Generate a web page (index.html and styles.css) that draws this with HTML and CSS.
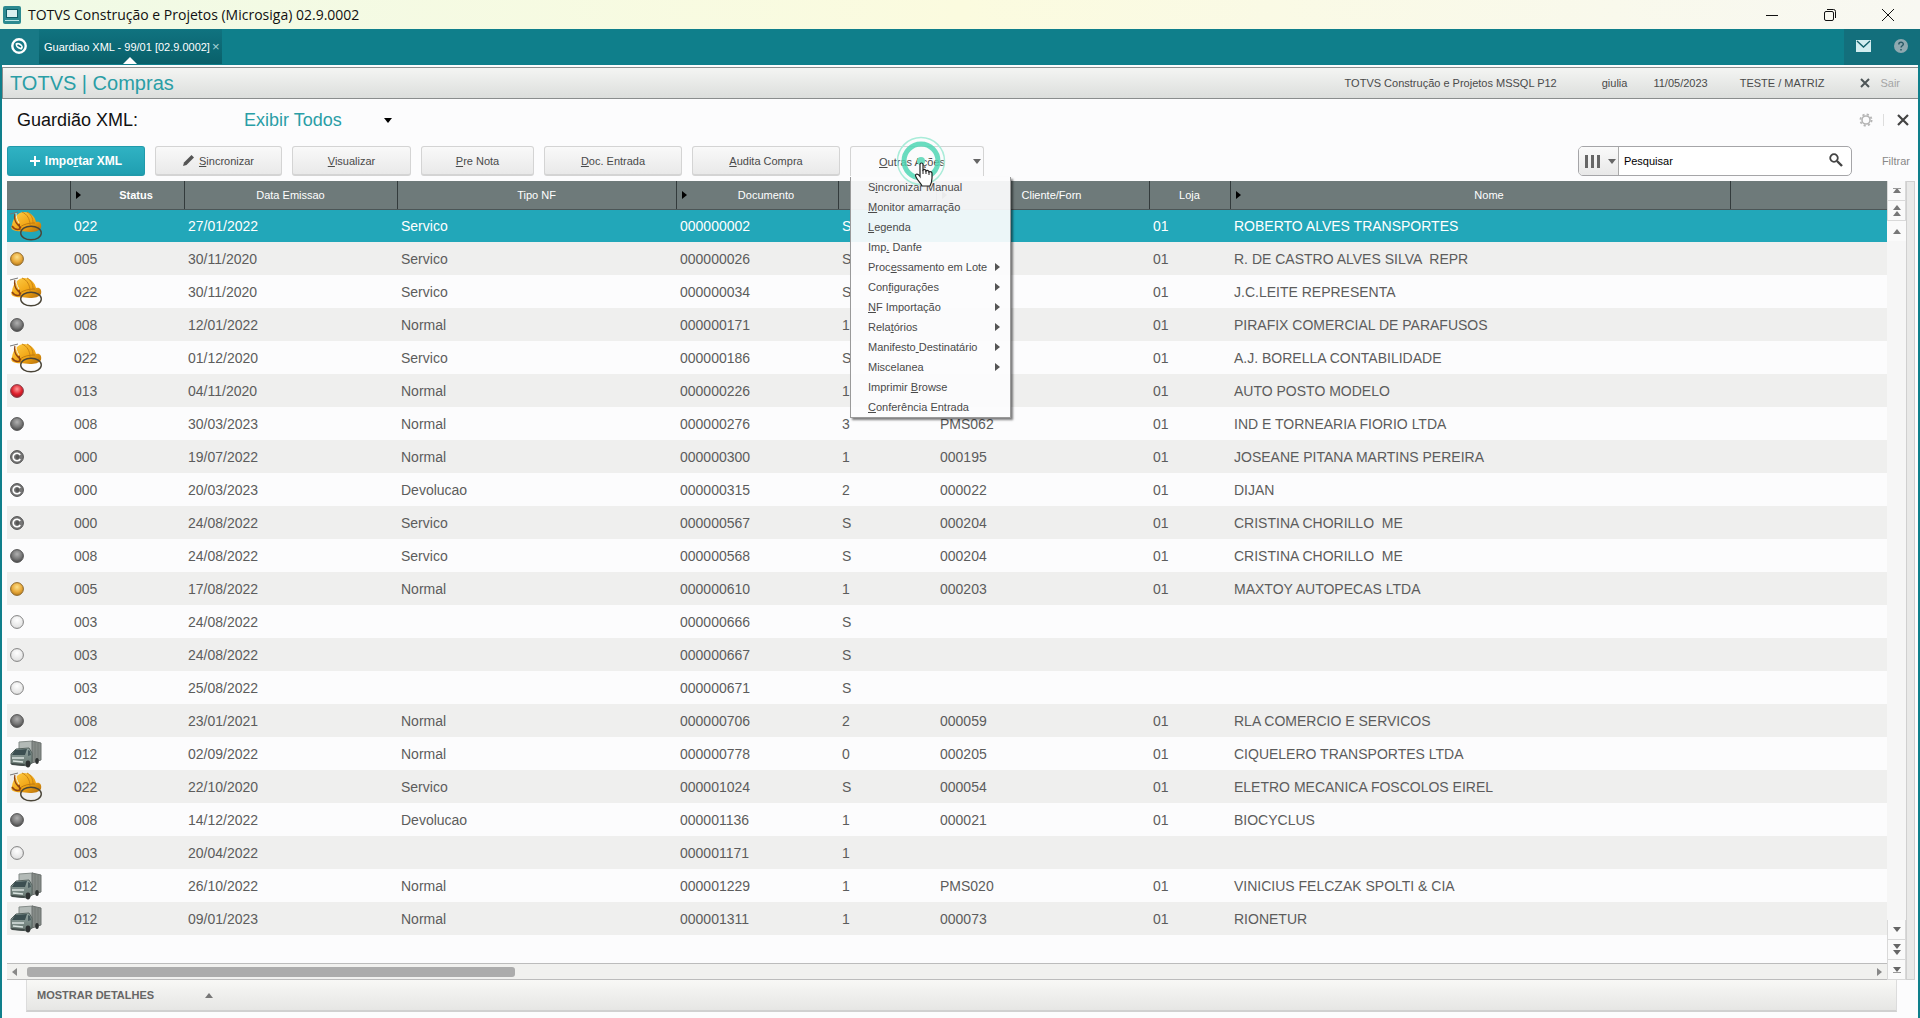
FILE: index.html
```html
<!DOCTYPE html>
<html lang="pt-BR">
<head>
    <meta charset="UTF-8">
    <meta name="viewport" content="width=device-width, initial-scale=1.0">
    <title>TOTVS Construção e Projetos (Microsiga) 02.9.0002</title>
    <link rel="stylesheet" href="styles.css">
</head>
<body>
    <svg class="defs" aria-hidden="true">
        <defs>
            <radialGradient id="gOrange" cx="50%" cy="35%" r="65%"><stop offset="0" stop-color="#fde08a"/><stop offset=".6" stop-color="#e8a93a"/><stop offset="1" stop-color="#b57a1c"/></radialGradient>
            <radialGradient id="gGray" cx="50%" cy="35%" r="65%"><stop offset="0" stop-color="#b0b0b0"/><stop offset=".6" stop-color="#777"/><stop offset="1" stop-color="#484848"/></radialGradient>
            <radialGradient id="gRed" cx="50%" cy="35%" r="65%"><stop offset="0" stop-color="#ff9a9a"/><stop offset=".6" stop-color="#e0202c"/><stop offset="1" stop-color="#a01520"/></radialGradient>
            <radialGradient id="gWhite" cx="50%" cy="35%" r="65%"><stop offset="0" stop-color="#fff"/><stop offset="1" stop-color="#dedede"/></radialGradient>
            <linearGradient id="gHelmet" x1="0" y1="0" x2="1" y2="1"><stop offset="0" stop-color="#ffcf4a"/><stop offset=".6" stop-color="#f0a312"/><stop offset="1" stop-color="#b06c0c"/></linearGradient>
            <linearGradient id="gCab" x1="0" y1="0" x2="0" y2="1"><stop offset="0" stop-color="#93a4a1"/><stop offset="1" stop-color="#66756f"/></linearGradient>
            <symbol id="ball-orange" viewBox="0 0 14 14"><circle cx="7" cy="7" r="6.4" fill="url(#gOrange)" stroke="#8d6a30"/></symbol>
            <symbol id="ball-gray" viewBox="0 0 14 14"><circle cx="7" cy="7" r="6.4" fill="url(#gGray)" stroke="#555"/></symbol>
            <symbol id="ball-red" viewBox="0 0 14 14"><circle cx="7" cy="7" r="6.4" fill="url(#gRed)" stroke="#84414a"/></symbol>
            <symbol id="ball-white" viewBox="0 0 14 14"><circle cx="7" cy="7" r="6.4" fill="url(#gWhite)" stroke="#808080"/></symbol>
            <symbol id="ball-c" viewBox="0 0 14 14"><circle cx="7" cy="7" r="6.4" fill="#777" stroke="#505050"/><path d="M10.200 5A3.800 3.800 0 1 0 10.200 9" fill="none" stroke="#fff" stroke-width="1.600"/><circle cx="7.500" cy="7" r="2" fill="#555"/></symbol>
            <symbol id="helmet" viewBox="0 0 32 30">
                <path d="M0 3l8-2" stroke="#777" fill="none"/>
                <path d="M2 14C3 7 8 1 14 1c7 0 11 5 12 10 4-1 6 2 5 6-2 3-6 4-11 4-7-1-13 0-17-2-2-1-2-3-1-5z" fill="url(#gHelmet)"/>
                <path d="M12 1c5 2 8 7 8 13M17 1c4 2 6 6 6 11" stroke="#c98414" fill="none"/>
                <path d="M10 16c4-3 9-4 15-4" stroke="#c07c10" fill="none"/>
                <path d="M5 3c-1 4 0 8 3 11l3 3M2 15c2 3 5 4 8 3l-1-5" stroke="#8f4312" fill="none" stroke-width="1.400"/>
                <path d="M6 2c0 4 1 7 3 10" stroke="#f4efe0" fill="none"/>
                <ellipse cx="21" cy="22" rx="10.300" ry="6.800" fill="none" stroke="#4a4538" stroke-width="1.400"/>
            </symbol>
            <symbol id="truck" viewBox="0 0 32 28">
                <path d="M9 2l14-1v18H9z" fill="#b3bab7" stroke="#858c89"/>
                <path d="M22 1l9 2v17l-9 3z" fill="#858b88" stroke="#6b706e"/>
                <path d="M25 2v19M28 3v17" stroke="#747a77"/>
                <path d="M1 14l5-5 13-1 3 5v10l-4 3-17-2z" fill="url(#gCab)" stroke="#56635f"/>
                <path d="M5 10l12-1-2 6-13 0z" fill="#3c4f51"/>
                <path d="M18 10l2 1 1 4-3 1z" fill="#4a5c5e"/>
                <path d="M2 18l12 0M3 21l10 1" stroke="#dbe4e1" stroke-width="1.300"/>
                <ellipse cx="18" cy="24" rx="2.400" ry="3.400" fill="#2e3232"/><ellipse cx="27" cy="21" rx="1.800" ry="3" fill="#2e3232"/>
                <path d="M1 23l14 1-1 2-12-1z" fill="#434c4a"/>
            </symbol>
        </defs>
    </svg>

    <header class="titlebar">
        <svg width="18" height="18" viewBox="0 0 18 18"><rect width="18" height="18" rx="2" fill="#2c8a90"/><rect x="3.500" y="3.500" width="11" height="8" fill="#d9f0ef" stroke="#0d5f68"/><path d="M2 14.500h14" stroke="#bfe6e5"/></svg>
        <h1>TOTVS Construção e Projetos (Microsiga) 02.9.0002</h1>
        <div class="window-buttons">
            <button type="button" aria-label="Minimizar"><svg width="14" height="14" viewBox="0 0 14 14"><path d="M1 7.500h12"/></svg></button>
            <button type="button" aria-label="Restaurar"><svg width="14" height="14" viewBox="0 0 14 14"><rect x="1.500" y="3.500" width="9" height="9" rx="1.500"/><path d="M4 1.500h6.500a2 2 0 0 1 2 2V10"/></svg></button>
            <button type="button" aria-label="Fechar"><svg width="14" height="14" viewBox="0 0 14 14"><path d="M1 1l12 12M13 1L1 13"/></svg></button>
        </div>
    </header>

    <nav class="tabbar">
        <a class="home" href="#" aria-label="Início"><svg width="16" height="16" viewBox="0 0 16 16"><circle cx="8" cy="8" r="6.700" fill="none" stroke="#fff" stroke-width="2.400"/><path d="M4.500 5.500c2-1.500 6-.500 7.500 3.500l-1 2.500C7 11.500 4.500 9 4.500 5.500z" fill="#fff"/><path d="M6.500 7l3.500 2" stroke="#14707a" stroke-width="1.600"/></svg></a>
        <div class="tab">
            <span>Guardiao XML - 99/01 [02.9.0002]</span>
            <button type="button" aria-label="Fechar aba">×</button>
        </div>
        <div class="tab-tools">
            <button type="button" aria-label="Mensagens"><svg width="15" height="12" viewBox="0 0 15 12"><rect width="15" height="12" fill="#d3edf0"/><path d="M1 1l6.500 6L14 1" fill="none" stroke="#13606a" stroke-width="1.400"/></svg></button>
            <button type="button" aria-label="Ajuda"><svg width="14" height="14" viewBox="0 0 14 14"><circle cx="7" cy="7" r="7" fill="#8fa9b0"/><path d="M4.800 5.500c0-3 4.600-2.800 4.500-.3 0 1.600-2.200 1.500-2.200 3.300M7 10v1.600" fill="none" stroke="#2a5a66" stroke-width="1.500"/></svg></button>
        </div>
    </nav>

    <div class="window">
        <div class="module">
            <h2>TOTVS | Compras</h2>
            <span class="env">TOTVS Construção e Projetos MSSQL P12</span>
            <span class="user">giulia</span>
            <span class="date">11/05/2023</span>
            <span class="branch">TESTE / MATRIZ</span>
            <a class="exit" href="#"><svg width="10" height="10" viewBox="0 0 10 10"><path d="M1 1l8 8M9 1L1 9" stroke="#4d5557" stroke-width="2"/></svg>Sair</a>
        </div>

        <main>
            <div class="view-head">
                <h3>Guardião XML:</h3>
                <button type="button" class="view-filter">Exibir Todos <i class="down black"></i></button>
                <div class="view-tools">
                    <button type="button" aria-label="Configurar"><svg width="14" height="14" viewBox="0 0 14 14"><circle cx="7" cy="7" r="4" fill="none" stroke="#b5b5b5" stroke-width="1.600"/><circle cx="7" cy="7" r="5.600" fill="none" stroke="#b5b5b5" stroke-width="1.800" stroke-dasharray="2.200 2.200"/></svg></button>
                    <button type="button" class="close" aria-label="Fechar"><svg width="12" height="12" viewBox="0 0 12 12"><path d="M1 1l10 10M11 1L1 11" stroke="#444" stroke-width="2.200"/></svg></button>
                </div>
            </div>

            <div class="toolbar">
                <button type="button" class="btn primary"><svg width="10" height="10" viewBox="0 0 10 10"><path d="M5 0v10M0 5h10" stroke="#fff" stroke-width="2"/></svg><span>Impo<u>r</u>tar XML</span></button>
                <button type="button" class="btn b-sinc"><svg width="11" height="11" viewBox="0 0 11 11"><path d="M0 11l1-3.500L8.500 0 11 2.500 3.500 10z" fill="#555"/></svg><span><u>S</u>incronizar</span></button>
                <button type="button" class="btn b-vis"><span><u>V</u>isualizar</span></button>
                <button type="button" class="btn b-pre"><span><u>P</u>re Nota</span></button>
                <button type="button" class="btn b-doc"><span><u>D</u>oc. Entrada</span></button>
                <button type="button" class="btn b-aud"><span><u>A</u>udita Compra</span></button>
                <div class="more">
                    <button type="button" class="btn b-more"><span><u>O</u>utras Ações</span><i class="down"></i></button>
                    <ul class="menu">
                        <li><a href="#">S<u>i</u>ncronizar Manual</a></li>
                        <li><a href="#"><u>M</u>onitor amarração</a></li>
                        <li><a href="#"><u>L</u>egenda</a></li>
                        <li><a href="#">Imp<u>.</u> Danfe</a></li>
                        <li class="sub"><a href="#">Proc<u>e</u>ssamento em Lote</a></li>
                        <li class="sub"><a href="#">Con<u>f</u>igurações</a></li>
                        <li class="sub"><a href="#"><u>N</u>F Importação</a></li>
                        <li class="sub"><a href="#">Rela<u>t</u>órios</a></li>
                        <li class="sub"><a href="#">Manifesto<u> </u>Destinatário</a></li>
                        <li class="sub"><a href="#">Miscelanea</a></li>
                        <li><a href="#">Imprimir <u>B</u>rowse</a></li>
                        <li><a href="#"><u>C</u>onferência Entrada</a></li>
                    </ul>
                    <svg class="pointer" width="52" height="54" viewBox="0 0 52 54">
                        <circle cx="25" cy="25" r="23.500" fill="none" stroke="#a9ecd9" stroke-width="1.500"/>
                        <circle cx="25" cy="25" r="17" fill="none" stroke="#4fd6b4" stroke-width="5" opacity=".85"/>
                        <circle cx="25" cy="25" r="4" fill="#6fdcc0"/>
                        <path d="M24 28.500c0-2 3-2 3 0V34c1-1 3-.500 3 1 1-1 3-.500 3 1 1.500-.800 3 0 3 1.500V42c0 4-1.500 7-2 8h-8c-1-3-6-7-6.500-10.500 0-2 2.500-2 4.500 1z" fill="#fff" stroke="#222" stroke-width="1.200"/>
                        <path d="M27 34v4M30 35v3M33 36v3" stroke="#222"/>
                    </svg>
                </div>
                <form class="search">
                    <button type="button" class="cols" aria-label="Colunas"><svg width="15" height="13" viewBox="0 0 15 13"><path d="M1.500 0v13M7.500 0v13M13.500 0v13" stroke="#666" stroke-width="3"/></svg><i class="down"></i></button>
                    <input type="text" value="Pesquisar" aria-label="Pesquisar">
                    <button type="button" class="lens" aria-label="Buscar"><svg width="14" height="14" viewBox="0 0 14 14"><circle cx="5" cy="5" r="3.800" fill="none" stroke="#444" stroke-width="1.800"/><path d="M8 8l5 5" stroke="#444" stroke-width="2.400"/></svg></button>
                </form>
                <a class="filter" href="#">Filtrar</a>
            </div>

            <div class="grid">
                <div class="grid-body">
                    <table>
                        <colgroup>
                            <col class="c-icon"><col class="c-status"><col class="c-data"><col class="c-tipo"><col class="c-doc"><col class="c-serie"><col class="c-forn"><col class="c-loja"><col class="c-nome"><col>
                        </colgroup>
                        <thead>
                            <tr><th></th><th class="key"><b>Status</b></th><th>Data Emissao</th><th>Tipo NF</th><th class="key">Documento</th><th></th><th class="key">Cliente/Forn</th><th>Loja</th><th class="key">Nome</th><th></th></tr>
                        </thead>
                        <tbody id="rows"></tbody>
                    </table>
                    <div class="hscroll"><i class="left"></i><div class="track"><div class="thumb"></div></div><i class="right"></i></div>
                </div>
                <div class="vnav">
                    <button type="button" aria-label="Primeiro"><i class="up bar"></i></button>
                    <button type="button" aria-label="Página anterior"><i class="up"></i><i class="up"></i></button>
                    <button type="button" class="plain" aria-label="Anterior"><i class="up"></i></button>
                    <div class="fill"></div>
                    <button type="button" aria-label="Próximo"><i class="down"></i></button>
                    <button type="button" aria-label="Próxima página"><i class="down"></i><i class="down"></i></button>
                    <button type="button" aria-label="Último"><i class="down bar"></i></button>
                </div>
                <div class="vtrack"></div>
            </div>

            <button type="button" class="details">MOSTRAR DETALHES <i class="up"></i></button>
        </main>
    </div>

    <script src="script.js"></script>
</body>
</html>
```
FILE: styles.css
```css
* {
    box-sizing: border-box;
}

body {
    margin: 0;
    min-height: 100vh;
    display: flex;
    flex-direction: column;
    font-family: "Liberation Sans", Arial, sans-serif;
    font-size: 11px;
    color: #4a4a4a;
    background-color: #0f7f8b;
}

h1, h2, h3, ul {
    margin: 0;
    padding: 0;
    font-weight: normal;
}

button {
    padding: 0;
    border: none;
    background: none;
    font: inherit;
    color: inherit;
}

a {
    color: inherit;
    text-decoration: none;
}

.defs {
    position: absolute;
    width: 0;
    height: 0;
}

/* setas */
.up, .down, .left, .right {
    width: 0;
    height: 0;
    border: 4px solid transparent;
}

.up {
    border-top: none;
    border-bottom: 5px solid #777;
}

.down {
    border-bottom: none;
    border-top: 5px solid #666;
}

.left {
    border-left: none;
    border-right: 5px solid #888;
}

.right {
    border-right: none;
    border-left: 5px solid #888;
}

.down.black {
    border-top-color: #000;
}

/* barra da janela */
.titlebar {
    display: flex;
    align-items: center;
    height: 29px;
    padding: 0 3px;
    gap: 7px;
    background: linear-gradient(90deg, #f0fae6, #fbfbdf 50%, #f8f8f2);
}

.titlebar h1 {
    flex: 1;
    font-family: "Open Sans", "Segoe UI", sans-serif;
    font-size: 14px;
    color: #111;
}

.window-buttons {
    display: flex;
}

.window-buttons button {
    width: 58px;
    height: 29px;
}

.window-buttons svg {
    display: block;
    margin: auto;
    fill: none;
    stroke: #111;
}

.tabbar {
    display: flex;
    height: 36px;
    background-color: #0f7f8b;
}

.home {
    width: 39px;
    padding: 9px 11px;
    background-color: #187986;
}

.tab {
    position: relative;
    display: flex;
    align-items: center;
    gap: 2px;
    height: 35px;
    padding: 0 2px 0 5px;
    color: #fff;
    background: linear-gradient(#107380, #09606a);
}

.tab button {
    color: #a5d3d8;
    font-size: 13px;
}

.tab::after {
    content: "";
    position: absolute;
    left: 50%;
    bottom: 0;
    margin-left: -7px;
    border: 7px solid transparent;
    border-top: none;
    border-bottom-color: #fff;
}

.tab-tools {
    display: flex;
    margin-left: auto;
    background-color: #136f7c;
}

.tab-tools button {
    width: 38px;
}

.window {
    flex: 1;
    display: flex;
    flex-direction: column;
    margin: 0 2px;
    padding-top: 2px;
    background-color: #fcfcfd;
}

.module {
    display: flex;
    align-items: center;
    height: 32px;
    padding: 0 18px 0 7px;
    border: 1px solid #8a8d8d;
    border-right: none;
    background: linear-gradient(#f4f5f3, #dcdedc);
}

.module h2 {
    flex: 1;
    font-size: 20px;
    color: #2a9ea6;
}

.user {
    margin-left: 45px;
}

.date {
    margin-left: 26px;
}

.branch {
    margin-left: 32px;
}

.exit {
    display: flex;
    align-items: center;
    gap: 10px;
    margin-left: 36px;
    color: #a5a5a5;
}

main {
    flex: 1;
    padding: 0 3px 0 5px;
}

.view-head {
    display: flex;
    align-items: center;
    height: 42px;
    padding-left: 10px;
}

.view-head h3 {
    width: 227px;
    font-size: 18px;
    color: #111;
}

.view-filter {
    display: flex;
    align-items: center;
    gap: 42px;
    font-size: 18px;
    color: #2a9ea6;
}

.view-tools {
    display: flex;
    align-items: center;
    gap: 10px;
    margin-left: auto;
    padding-right: 6px;
}

.view-tools svg {
    display: block;
}

.view-tools .close {
    padding-left: 13px;
    border-left: 1px solid #ddd;
}

.toolbar {
    display: flex;
    align-items: center;
    gap: 10px;
    padding-top: 5px;
    margin-bottom: 5px;
}

.btn {
    display: flex;
    align-items: center;
    justify-content: center;
    gap: 5px;
    height: 30px;
    border: 1px solid #d4d4d4;
    border-bottom-width: 2px;
    border-radius: 3px;
    background: linear-gradient(#f9f9f9, #e9e9e9);
}

.btn.primary {
    width: 138px;
    border-color: #209aab;
    color: #fff;
    font-weight: bold;
    font-size: 12px;
    background: linear-gradient(#30b2c3, #209fb1);
}

.b-sinc { width: 127px; }
.b-vis { width: 119px; }
.b-pre { width: 113px; }
.b-doc { width: 138px; }
.b-aud { width: 148px; }

.more {
    position: relative;
}

.btn.b-more {
    justify-content: space-between;
    width: 134px;
    padding: 0 2px 0 28px;
    border-bottom: none;
    border-radius: 3px 3px 0 0;
    background: #fbfbfc;
}

.menu {
    position: absolute;
    z-index: 2;
    top: 31px;
    left: 0;
    width: 161px;
    list-style: none;
    border: 1px solid #9a9a9a;
    border-top: none;
    background-color: rgba(252, 252, 253, 0.93);
    box-shadow: 2px 2px 2px rgba(0, 0, 0, 0.5);
}

.menu li {
    display: flex;
    align-items: center;
    justify-content: space-between;
    height: 20px;
    padding: 0 10px 0 17px;
}

.menu .sub::after {
    content: "";
    border: 4px solid transparent;
    border-right: none;
    border-left: 5px solid #555;
}

.pointer {
    position: absolute;
    z-index: 3;
    top: -10px;
    left: 46px;
}

.search {
    display: flex;
    width: 274px;
    height: 30px;
    margin-left: auto;
    border: 1px solid #a5a5a8;
    border-radius: 5px;
    background-color: #fff;
    overflow: hidden;
}

.cols {
    display: flex;
    align-items: center;
    gap: 8px;
    width: 40px;
    padding-left: 6px;
    border-right: 1px solid #aaa;
    background: linear-gradient(#fafafa, #e8e8e8);
}

.search input {
    flex: 1;
    min-width: 0;
    padding: 0 5px;
    border: none;
    outline: none;
    font: inherit;
    color: #000;
}

.lens {
    width: 30px;
}

.filter {
    margin-left: 20px;
    padding-right: 5px;
    color: #888;
}

.grid {
    display: flex;
}

.grid-body {
    flex: 1;
    display: flex;
    flex-direction: column;
    min-width: 0;
}

table {
    width: 100%;
    table-layout: fixed;
    border-collapse: collapse;
}

.c-icon { width: 63px; }
.c-status { width: 114px; }
.c-data { width: 213px; }
.c-tipo { width: 279px; }
.c-doc { width: 162px; }
.c-serie { width: 98px; }
.c-forn { width: 213px; }
.c-loja { width: 81px; }
.c-nome { width: 500px; }

th {
    position: relative;
    height: 28px;
    padding: 0;
    border-right: 1px solid #333b3c;
    border-bottom: 1px solid #4c5556;
    font-weight: normal;
    color: #fff;
    background-color: #6e7a7a;
}

th:last-child {
    border-right: none;
}

th.key {
    padding-left: 18px;
}

th.key::before {
    content: "";
    position: absolute;
    left: 5px;
    top: 10px;
    border: 4px solid transparent;
    border-right: none;
    border-left: 5px solid #000;
}

td {
    height: 33px;
    padding: 0 4px;
    font-size: 14px;
    color: #5c5c5c;
    white-space: pre;
}

td:first-child {
    padding-left: 3px;
}

td svg {
    display: block;
}

tbody tr:nth-child(even) {
    background-color: #efefee;
}

tbody tr.selected {
    background-color: #22a7b9;
}

tr.selected td {
    color: #fff;
}

.hscroll {
    display: flex;
    align-items: center;
    gap: 10px;
    height: 17px;
    margin-top: 28px;
    padding: 0 5px;
    border-top: 1px solid #bcbcbc;
    border-bottom: 1px solid #bcbcbc;
    background-color: #f1f1ef;
}

.track {
    flex: 1;
}

.thumb {
    width: 26.5%;
    height: 10px;
    border-radius: 3px;
    background-color: #acacac;
}

.vnav {
    display: flex;
    flex-direction: column;
    width: 19px;
    background-color: #f6f6f6;
}

.vnav button {
    display: flex;
    flex-direction: column;
    align-items: center;
    justify-content: center;
    gap: 1px;
    height: 20px;
    border: 1px solid #d9d9d9;
    border-top: none;
    background-color: #fafafa;
}

.vnav .plain {
    border: none;
}

.vnav .bar::before {
    content: "";
    display: block;
    width: 8px;
    height: 1px;
    margin-left: -4px;
    background-color: #999;
}

.fill {
    flex: 1;
}

.vtrack {
    width: 9px;
    border: 1px solid #d0d0d0;
    background-color: #e9e9e8;
}

.details {
    display: flex;
    align-items: center;
    gap: 51px;
    width: calc(100% - 37px);
    height: 32px;
    margin-left: 19px;
    padding-left: 10px;
    border: 1px solid #dcdcdc;
    border-top: none;
    border-bottom: 2px solid #d0d0d0;
    font-weight: bold;
    color: #666;
    background: linear-gradient(#f8f8f6, #e6e6e4);
}
```
FILE: script.js
```js
// ícone, status, emissão, tipo, documento, série, fornecedor, loja, nome
const rows = [
    ['helmet', '022', '27/01/2022', 'Servico', '000000002', 'S', '', '01', 'ROBERTO ALVES TRANSPORTES'],
    ['ball-orange', '005', '30/11/2020', 'Servico', '000000026', 'S', '', '01', 'R. DE CASTRO ALVES SILVA  REPR'],
    ['helmet', '022', '30/11/2020', 'Servico', '000000034', 'S', '', '01', 'J.C.LEITE REPRESENTA'],
    ['ball-gray', '008', '12/01/2022', 'Normal', '000000171', '1', '', '01', 'PIRAFIX COMERCIAL DE PARAFUSOS'],
    ['helmet', '022', '01/12/2020', 'Servico', '000000186', 'S', '', '01', 'A.J. BORELLA CONTABILIDADE'],
    ['ball-red', '013', '04/11/2020', 'Normal', '000000226', '1', '', '01', 'AUTO POSTO MODELO'],
    ['ball-gray', '008', '30/03/2023', 'Normal', '000000276', '3', 'PMS062', '01', 'IND E TORNEARIA FIORIO LTDA'],
    ['ball-c', '000', '19/07/2022', 'Normal', '000000300', '1', '000195', '01', 'JOSEANE PITANA MARTINS PEREIRA'],
    ['ball-c', '000', '20/03/2023', 'Devolucao', '000000315', '2', '000022', '01', 'DIJAN'],
    ['ball-c', '000', '24/08/2022', 'Servico', '000000567', 'S', '000204', '01', 'CRISTINA CHORILLO  ME'],
    ['ball-gray', '008', '24/08/2022', 'Servico', '000000568', 'S', '000204', '01', 'CRISTINA CHORILLO  ME'],
    ['ball-orange', '005', '17/08/2022', 'Normal', '000000610', '1', '000203', '01', 'MAXTOY AUTOPECAS LTDA'],
    ['ball-white', '003', '24/08/2022', '', '000000666', 'S', '', '', ''],
    ['ball-white', '003', '24/08/2022', '', '000000667', 'S', '', '', ''],
    ['ball-white', '003', '25/08/2022', '', '000000671', 'S', '', '', ''],
    ['ball-gray', '008', '23/01/2021', 'Normal', '000000706', '2', '000059', '01', 'RLA COMERCIO E SERVICOS'],
    ['truck', '012', '02/09/2022', 'Normal', '000000778', '0', '000205', '01', 'CIQUELERO TRANSPORTES LTDA'],
    ['helmet', '022', '22/10/2020', 'Servico', '000001024', 'S', '000054', '01', 'ELETRO MECANICA FOSCOLOS EIREL'],
    ['ball-gray', '008', '14/12/2022', 'Devolucao', '000001136', '1', '000021', '01', 'BIOCYCLUS'],
    ['ball-white', '003', '20/04/2022', '', '000001171', '1', '', '', ''],
    ['truck', '012', '26/10/2022', 'Normal', '000001229', '1', 'PMS020', '01', 'VINICIUS FELCZAK SPOLTI & CIA'],
    ['truck', '012', '09/01/2023', 'Normal', '000001311', '1', '000073', '01', 'RIONETUR']
];

const tbody = document.getElementById('rows');

rows.forEach((row, i) => {
    const tr = document.createElement('tr');
    if (i === 0) tr.className = 'selected';

    const [icon, ...cells] = row;
    const size = icon.startsWith('ball') ? [14, 14] : [32, 30];
    tr.innerHTML = `<td><svg width="${size[0]}" height="${size[1]}"><use href="#${icon}"/></svg></td>`;

    // a última coluna fica vazia
    [...cells, ''].forEach(text => {
        const td = document.createElement('td');
        td.textContent = text;
        tr.appendChild(td);
    });
    tbody.appendChild(tr);
});
```
